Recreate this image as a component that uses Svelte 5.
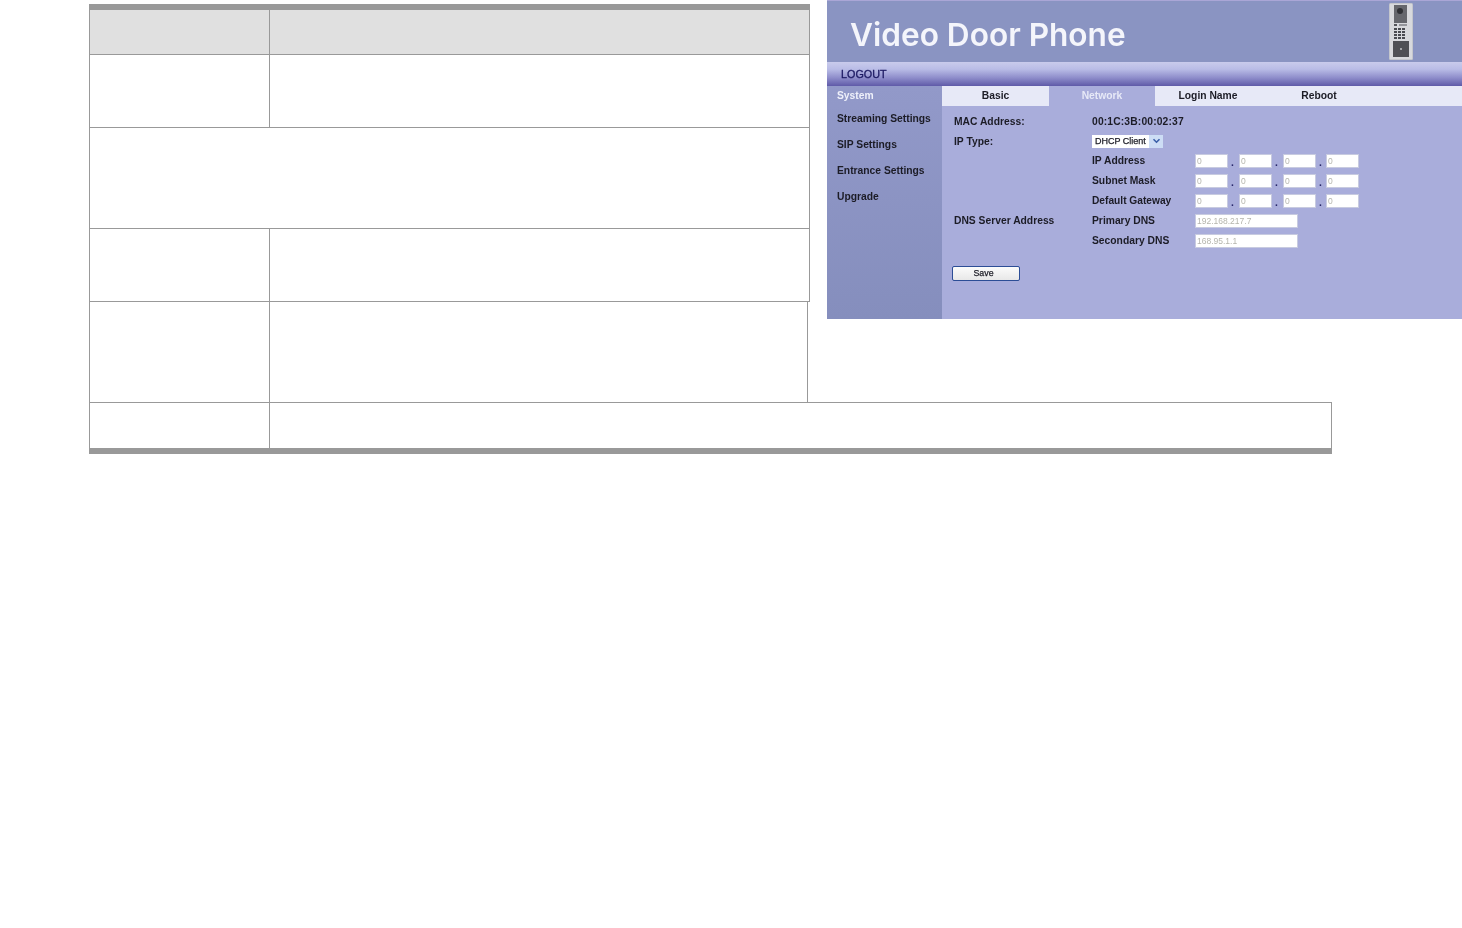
<script>
	const rows = [
		{ cls: 'head', cols: true },
		{ cls: 'r72', cols: true },
		{ cls: 'r100', cols: false },
		{ cls: 'r72', cols: true },
		{ cls: 'r100 narrow', cols: true },
		{ cls: 'last', cols: true }
	];

	const menu = ['Streaming Settings', 'SIP Settings', 'Entrance Settings', 'Upgrade'];
	const tabs = ['Basic', 'Network', 'Login Name', 'Reboot'];
	const ipRows = [
		{ label: 'IP Address', cls: '' },
		{ label: 'Subnet Mask', cls: '' },
		{ label: 'Default Gateway', cls: 'small' }
	];
	const dnsRows = [
		{ label: 'Primary DNS', value: '192.168.217.7' },
		{ label: 'Secondary DNS', value: '168.95.1.1' }
	];
</script>

<div class="page">
	<div class="table">
		<div class="bar"></div>
		{#each rows as row}
			<div class="row {row.cls}">
				{#if row.cols}
					<div class="cell first"></div>
					<div class="cell"></div>
				{/if}
			</div>
		{/each}
		<div class="bar wide"></div>
	</div>

	<div class="shot">
		<header>
			<span class="title">Video Door Phone</span>
			<svg class="device" width="24" height="57" viewBox="0 0 24 57">
				<rect x="0" y="0" width="24" height="57" rx="1.5" fill="#c4c6cc" />
				<rect x="1" y="1" width="22" height="55" fill="#d8d9dd" />
				<rect x="5" y="2" width="13" height="18" fill="#66676d" />
				<circle cx="11" cy="8" r="3" fill="#303136" />
				<rect x="5" y="21" width="3" height="2" fill="#55565c" />
				<rect x="10" y="21" width="8" height="2" fill="#95969c" />
				{#each [25, 28, 31, 34] as y}
					{#each [5, 9, 13] as x}
						<rect {x} {y} width="3" height="2" fill="#4a4b51" />
					{/each}
				{/each}
				<rect x="4" y="38" width="16" height="16" fill="#4f5055" />
				<rect x="11" y="45" width="2" height="2" fill="#a5a6aa" />
			</svg>
		</header>
		<div class="logout">LOGOUT</div>
		<div class="main">
			<nav>
				<div class="system">System</div>
				{#each menu as item}
					<div class="item">{item}</div>
				{/each}
			</nav>
			<section>
				<div class="tabs">
					{#each tabs as tab}
						<div class="tab" class:active={tab === 'Network'}>{tab}</div>
					{/each}
				</div>
				<div class="form">
					<div class="line mac">
						<span class="k">MAC Address:</span>
						<span class="v wide">00:1C:3B:00:02:37</span>
					</div>
					<div class="line iptype">
						<span class="k">IP Type:</span>
						<span class="select">
							<span>DHCP Client</span>
							<span class="arrow">
								<svg width="9" height="6" viewBox="0 0 9 6">
									<path d="M1.5 1.2 4.5 4.2 7.5 1.2" fill="none" stroke="#3a5fa8" stroke-width="1.6" />
								</svg>
							</span>
						</span>
					</div>
					{#each ipRows as r}
						<div class="line">
							<span class="k"></span>
							<span class="v {r.cls}">{r.label}</span>
							<span class="ips">
								{#each [0, 1, 2, 3] as i}
									{#if i > 0}<span class="dot" class:tight={i === 3}>.</span>{/if}
									<span class="input">0</span>
								{/each}
							</span>
						</div>
					{/each}
					{#each dnsRows as r, i}
						<div class="line">
							<span class="k">{i === 0 ? 'DNS Server Address' : ''}</span>
							<span class="v">{r.label}</span>
							<span class="input long">{r.value}</span>
						</div>
					{/each}
					<div class="save">Save</div>
				</div>
			</section>
		</div>
	</div>
</div>

<style>
	:global(body) {
		background: #fff;
		font-family: "Liberation Sans", Arial, sans-serif;
	}

	.page {
		display: grid;
		grid-template-columns: 89px 738px 635px;
		width: 1462px;
		height: 928px;
		overflow: hidden;
	}

	/* table on the left */
	.table {
		grid-column: 2;
		padding-top: 4px;
		height: 450px;
	}

	.bar {
		width: 721px;
		height: 6px;
		background: #999;
	}

	.bar.wide {
		width: 1243px;
	}

	.row {
		display: flex;
		box-sizing: border-box;
		width: 721px;
		border: 1px solid #999;
		border-top: 0;
	}

	.head {
		height: 45px;
		background: #e0e0e0;
	}

	.r72 {
		height: 73px;
	}

	.r100 {
		height: 101px;
	}

	.narrow {
		width: 719px;
		height: 100px;
		border-bottom: 0;
	}

	.last {
		width: 1243px;
		height: 46px;
		border-top: 1px solid #999;
		border-bottom: 0;
	}

	.cell.first {
		box-sizing: border-box;
		width: 180px;
		flex: none;
		border-right: 1px solid #999;
	}

	/* picture of the web admin page */
	.shot {
		grid-column: 3;
		width: 635px;
		height: 319px;
		display: flex;
		flex-direction: column;
		background: #a9addb;
		color: #1c1c26;
		font-size: 10.3px;
		font-weight: bold;
		filter: blur(0.45px);
		overflow: hidden;
	}

	header {
		height: 62px;
		flex: none;
		box-sizing: border-box;
		border-top: 1px solid #aaa6d6;
		background: #8a94c2;
		display: flex;
		align-items: flex-start;
		justify-content: space-between;
		padding: 2px 49px 0 23px;
	}

	.title {
		margin-top: 13px;
		font-family: Inter, "Liberation Sans", sans-serif;
		font-size: 31.6px;
		line-height: 38px;
		font-weight: 600;
		color: #f4f5fb;
		white-space: nowrap;
	}

	.logout {
		height: 24px;
		flex: none;
		box-sizing: border-box;
		padding: 5px 0 0 14px;
		font-size: 10.8px;
		line-height: 14px;
		font-weight: normal;
		-webkit-text-stroke: 0.3px #1d1a63;
		color: #1d1a63;
		background: linear-gradient(#c9cbec 0, #b9bce6 30%, #8f8ecb 65%, #5f5aa8 100%);
	}

	.main {
		flex: 1;
		display: flex;
	}

	nav {
		width: 115px;
		flex: none;
		background: linear-gradient(#9299c9, #858ebd);
		padding-left: 10px;
		box-sizing: border-box;
	}

	.system {
		color: #eef0fa;
		height: 20px;
		line-height: 20px;
	}

	.item {
		height: 26px;
		line-height: 26px;
	}

	section {
		flex: 1;
		min-width: 0;
	}

	.tabs {
		display: flex;
		height: 20px;
		background: #e7e9f7;
	}

	.tab {
		width: 107px;
		text-align: center;
		line-height: 20px;
	}

	.tab.active {
		width: 106px;
		background: #a9addb;
		color: #e7e9f7;
	}

	.tab:nth-child(3) {
		width: 106px;
	}

	.tab:nth-child(4) {
		width: 116px;
	}

	.form {
		padding: 6px 0 0 12px;
	}

	.line {
		display: flex;
		align-items: center;
		height: 20px;
	}

	.k {
		width: 138px;
		flex: none;
		padding-bottom: 2px;
		box-sizing: border-box;
	}

	.v {
		width: 103px;
		flex: none;
		padding-bottom: 2px;
		box-sizing: border-box;
	}

	.mac .k,
	.mac .v,
	.iptype .k {
		padding-bottom: 0;
	}

	.v.wide {
		letter-spacing: 0.15px;
	}

	.v.small {
		font-size: 10.2px;
	}

	.mac {
		height: 19px;
	}

	.iptype {
		height: 20px;
	}

	.select {
		display: flex;
		align-items: center;
		width: 71px;
		height: 13px;
		box-sizing: border-box;
		background: #fff;
		font-size: 9px;
		font-weight: normal;
		-webkit-text-stroke: 0.25px #1c1c26;
		padding-left: 3px;
		justify-content: space-between;
	}

	.arrow {
		display: flex;
		align-items: center;
		justify-content: center;
		width: 14px;
		height: 13px;
		background: #cdddf5;
	}

	.ips {
		display: flex;
		align-items: center;
	}

	.dot {
		width: 11px;
		margin-left: -1px;
		padding-right: 1px;
		text-align: center;
		color: #27276a;
		line-height: 14px;
		padding-top: 3px;
	}

	.dot.tight {
		padding-right: 0;
	}

	.input {
		display: block;
		box-sizing: border-box;
		width: 33px;
		height: 14px;
		background: #fff;
		border: 1px solid #c8cbe0;
		color: #b5b5ad;
		font-size: 8.5px;
		font-weight: normal;
		line-height: 12px;
		padding-left: 1px;
	}

	.input.long {
		width: 103px;
	}

	.save {
		box-sizing: border-box;
		width: 68px;
		height: 15px;
		margin: 15px 0 0 -2px;
		padding-right: 5px;
		background: linear-gradient(#fbfbfb, #e8e8e8);
		border: 1px solid #2c4d96;
		border-radius: 2px;
		text-align: center;
		font-size: 8.8px;
		font-weight: normal;
		line-height: 13px;
		-webkit-text-stroke: 0.25px #1c1c26;
	}
</style>
